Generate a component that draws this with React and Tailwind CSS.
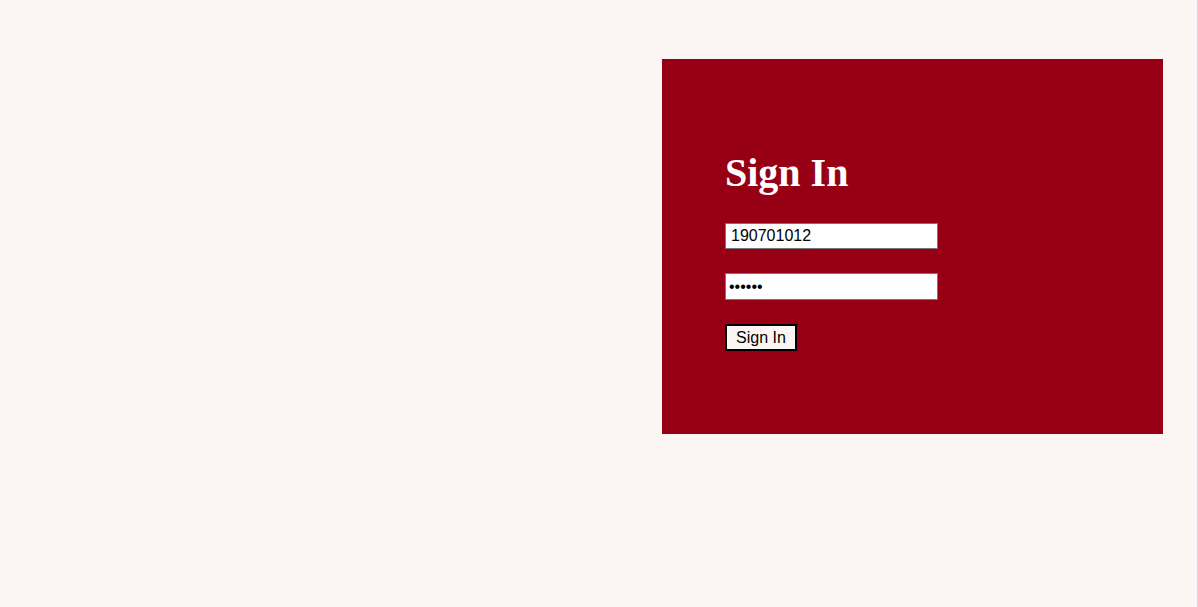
import { useState } from 'react';

const App = () => {
  const [id, setId] = useState('190701012');
  const [pw, setPw] = useState('123456');

  return (
    <div className="min-h-screen w-full bg-[#fbf6f3] border-r border-[#d3d3da] flex justify-end items-start">
      {/* Sign in panel */}
      <div className="w-[501px] h-[375px] mt-[59px] mr-[34px] bg-[#970014] pl-[63px] pt-[91px]">
        <h1 className="text-[40px] leading-[46px] font-bold text-white font-['Liberation_Serif',serif]">
          Sign In
        </h1>
        <form className="font-['Liberation_Sans',Arial,sans-serif]" onSubmit={(e) => e.preventDefault()}>
          <input
            type="text"
            value={id}
            onChange={(e) => setId(e.target.value)}
            className="block mt-[27px] w-[213px] h-[26px] bg-white border border-[#767676] pl-[5px] text-[16px] text-black outline-none"
          />
          <input
            type="password"
            value={pw}
            onChange={(e) => setPw(e.target.value)}
            className="block mt-[24px] w-[213px] h-[27px] bg-white border border-[#767676] pl-[3px] text-[16px] text-black outline-none"
          />
          <button
            type="submit"
            className="block mt-[24px] h-[27px] px-[9px] border-2 border-black bg-[#fbf6f3] text-[16px] leading-none text-black"
          >
            Sign In
          </button>
        </form>
      </div>
    </div>
  );
};

export default App;
